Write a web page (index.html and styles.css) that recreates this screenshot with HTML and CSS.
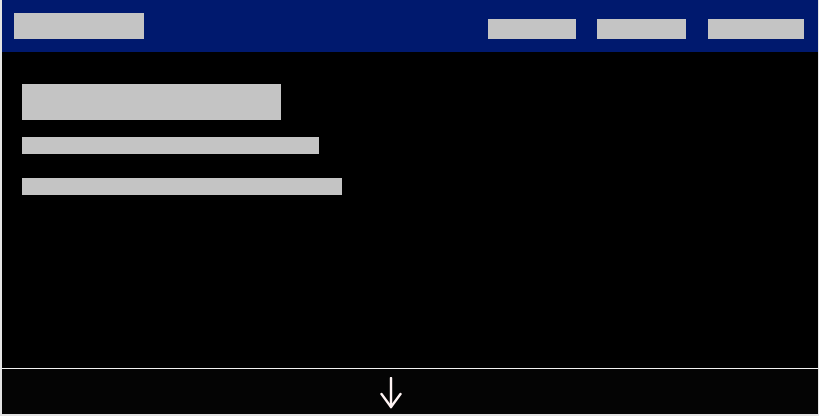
FILE: index.html
```html
<!DOCTYPE html>
<html lang="en">
<head>
    <meta charset="UTF-8">
    <meta name="viewport" content="width=device-width, initial-scale=1.0">
    <title>Landing</title>
    <link rel="stylesheet" href="styles.css">
</head>
<body>

<div class="frame">
    <header class="topbar">
        <div class="logo"></div>
        <nav class="nav">
            <span class="nav-item nav-a"></span>
            <span class="nav-item nav-b"></span>
            <span class="nav-item nav-c"></span>
        </nav>
    </header>

    <main class="hero">
        <div class="hero-title"></div>
        <div class="hero-line line-a"></div>
        <div class="hero-line line-b"></div>
    </main>

    <footer class="scroll">
        <svg width="24" height="32" viewBox="0 0 24 32" fill="none" stroke="#fff4f4" stroke-width="2.4" stroke-linecap="round" stroke-linejoin="round">
            <path d="M11 1 V30"/>
            <path d="M1.5 17 L11 30 L20.5 17"/>
        </svg>
    </footer>
</div>

</body>
</html>
```

FILE: styles.css
```css
html, body {
    margin: 0;
    padding: 0;
}
body {
    background-color: #e4e4e4;
    width: 819px;
    height: 416px;
    box-sizing: border-box;
    padding: 0 1px 2px 2px;
    font-family: "Liberation Sans", Arial, sans-serif;
}
.frame {
    display: flex;
    flex-direction: column;
    height: 100%;
    background-color: #000;
}
.topbar {
    background-color: #00196e;
    height: 52px;
    display: flex;
    align-items: flex-start;
    justify-content: space-between;
    padding: 0 14px 0 12px;
}
.logo {
    width: 130px;
    height: 26px;
    margin-top: 13px;
    background-color: #c4c4c4;
}
.nav {
    display: flex;
    gap: 21px;
    margin-top: 19px;
}
.nav-item {
    display: block;
    height: 20px;
    background-color: #c4c4c4;
}
.nav-a { width: 88px; }
.nav-b { width: 89px; }
.nav-c { width: 96px; margin-left: 1px; }
.hero {
    flex: 1;
    padding: 32px 20px 0;
    border-bottom: 1px solid #f2f2f2;
}
.hero-title {
    width: 259px;
    height: 36px;
    background-color: #c4c4c4;
}
.hero-line {
    height: 17px;
    background-color: #c4c4c4;
}
.line-a {
    width: 297px;
    margin-top: 17px;
}
.line-b {
    width: 320px;
    margin-top: 24px;
}
.scroll {
    height: 45px;
    background-color: #040404;
    display: flex;
    justify-content: center;
    padding-top: 8px;
    box-sizing: border-box;
    padding-right: 36px;
}
```
